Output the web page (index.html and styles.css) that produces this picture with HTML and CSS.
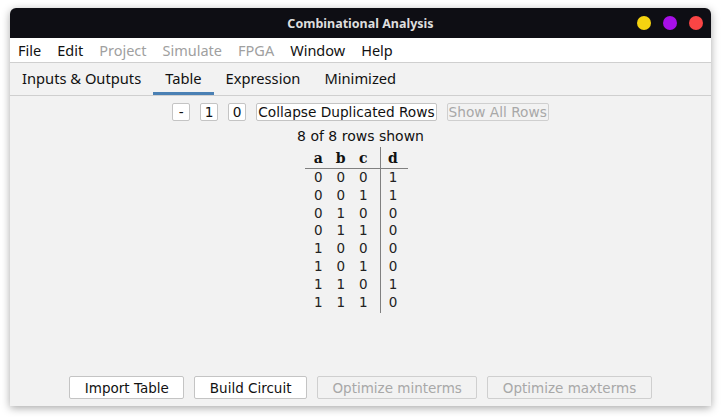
FILE: index.html
```html
<html lang="en-us">
  <head>
    <meta charset="utf-8" />
    <title>Combinational Analysis</title>
    <link rel="stylesheet" href="styles.css">
  </head>
  <body>
    <div class="window">
      <div class="titlebar">
        <span class="title">Combinational Analysis</span>
        <div class="dots">
          <span class="dot yellow"></span>
          <span class="dot purple"></span>
          <span class="dot red"></span>
        </div>
      </div>

      <div class="menubar">
        <span>File</span>
        <span>Edit</span>
        <span class="off">Project</span>
        <span class="off">Simulate</span>
        <span class="off">FPGA</span>
        <span>Window</span>
        <span>Help</span>
      </div>

      <div class="tabs">
        <span class="tab">Inputs &amp; Outputs</span>
        <span class="tab active">Table</span>
        <span class="tab">Expression</span>
        <span class="tab">Minimized</span>
      </div>

      <div class="content">
        <div class="toolbar">
          <button class="btn small">-</button>
          <button class="btn small">1</button>
          <button class="btn small">0</button>
          <button class="btn">Collapse Duplicated Rows</button>
          <button class="btn" disabled>Show All Rows</button>
        </div>
        <div class="count">8 of 8 rows shown</div>

        <!-- truth table -->
        <div class="truth">
          <div class="inputs">
            <div class="row head"><span>a</span><span>b</span><span>c</span></div>
            <div class="row"><span>0</span><span>0</span><span>0</span></div>
            <div class="row"><span>0</span><span>0</span><span>1</span></div>
            <div class="row"><span>0</span><span>1</span><span>0</span></div>
            <div class="row"><span>0</span><span>1</span><span>1</span></div>
            <div class="row"><span>1</span><span>0</span><span>0</span></div>
            <div class="row"><span>1</span><span>0</span><span>1</span></div>
            <div class="row"><span>1</span><span>1</span><span>0</span></div>
            <div class="row"><span>1</span><span>1</span><span>1</span></div>
          </div>
          <div class="outputs">
            <div class="row head"><span>d</span></div>
            <div class="row"><span>1</span></div>
            <div class="row"><span>1</span></div>
            <div class="row"><span>0</span></div>
            <div class="row"><span>0</span></div>
            <div class="row"><span>0</span></div>
            <div class="row"><span>0</span></div>
            <div class="row"><span>1</span></div>
            <div class="row"><span>0</span></div>
          </div>
        </div>

        <div class="actions">
          <button class="btn big">Import Table</button>
          <button class="btn big">Build Circuit</button>
          <button class="btn big" disabled>Optimize minterms</button>
          <button class="btn big" disabled>Optimize maxterms</button>
        </div>
      </div>
    </div>
  </body>
</html>
```

FILE: styles.css
```css
body {
  margin: 0;
  background: #ffffff;
  font-family: "DejaVu Sans", sans-serif;
  color: #111;
}

.window {
  margin: 8px 10px;
  width: 701px;
  height: 398px;
  display: flex;
  flex-direction: column;
  background: #f2f2f2;
  border-radius: 6px 6px 0 0;
  box-shadow: 0 2px 9px rgba(0, 0, 0, 0.35);
  overflow: hidden;
}

.titlebar {
  height: 30px;
  flex: none;
  background: #0e0e14;
  display: flex;
  align-items: center;
  justify-content: center;
  position: relative;
}

.title {
  color: #dedede;
  font-family: "Noto Sans", sans-serif;
  font-weight: bold;
  font-size: 12.5px;
}

.dots {
  position: absolute;
  right: 8px;
  top: 8px;
  display: flex;
  gap: 12px;
}

.dot {
  width: 14px;
  height: 14px;
  border-radius: 50%;
}
.yellow { background: #f5d310; }
.purple { background: #a70fe8; }
.red { background: #fa4545; }

.menubar {
  height: 23px;
  flex: none;
  background: #ffffff;
  border-bottom: 1px solid #cfcfcf;
  display: flex;
  align-items: center;
  gap: 16px;
  padding-left: 8px;
  padding-bottom: 1px;
  font-family: "Noto Sans", sans-serif;
  font-size: 14.5px;
}
.menubar .off {
  color: #a0a0a0;
}

.tabs {
  height: 32px;
  flex: none;
  border-bottom: 1px solid #cfcfcf;
  display: flex;
  align-items: stretch;
  font-family: "Noto Sans", sans-serif;
  font-size: 14.7px;
}
.tab {
  padding: 0 12px;
  display: flex;
  align-items: center;
  border-bottom: 3px solid transparent;
  padding-top: 1px;
}
.tab.active {
  border-bottom-color: #4a80b4;
}

.content {
  flex: 1;
  display: flex;
  flex-direction: column;
  align-items: center;
}

.toolbar {
  margin-top: 7px;
  display: flex;
  gap: 10px;
}

.btn {
  font-family: "DejaVu Sans", sans-serif;
  font-size: 13.7px;
  height: 18px;
  padding: 0 1px;
  background: #ffffff;
  color: #111;
  border: 1px solid #c4c4c4;
  border-radius: 2px;
  line-height: 16px;
}
.btn.small {
  width: 18px;
}
.btn:disabled {
  background: #f2f2f2;
  color: #a8a8a8;
  border-color: #cfcfcf;
}

.count {
  margin-top: 7px;
  font-size: 14px;
  line-height: 17px;
}

.truth {
  margin-top: 2px;
  margin-right: 8px;
  display: flex;
  font-size: 13.5px;
  color: #222;
}
.row {
  display: flex;
  height: 17.8px;
  line-height: 17.8px;
}
.row.head {
  height: 21px;
  line-height: 23px;
  font-family: "DejaVu Serif", serif;
  font-weight: bold;
  font-size: 14px;
  color: #111;
  border-bottom: 1px solid #808080;
}
.inputs {
  padding: 0 5.5px 0 2px;
}
.inputs .row.head {
  margin: 0 -5.5px 0 -2px;
  padding: 0 5.5px 0 2px;
}
.inputs .row span {
  width: 22.5px;
  text-align: center;
}
.outputs {
  border-left: 1px solid #808080;
  padding-bottom: 2px;
}
.outputs .row span {
  width: 24px;
  text-align: center;
}
.outputs .row {
  padding-right: 3px;
}

.actions {
  margin-top: auto;
  margin-bottom: 7px;
  display: flex;
  gap: 10px;
}
.btn.big {
  height: 23px;
  font-size: 13.5px;
  padding: 0 14.5px;
}
```
